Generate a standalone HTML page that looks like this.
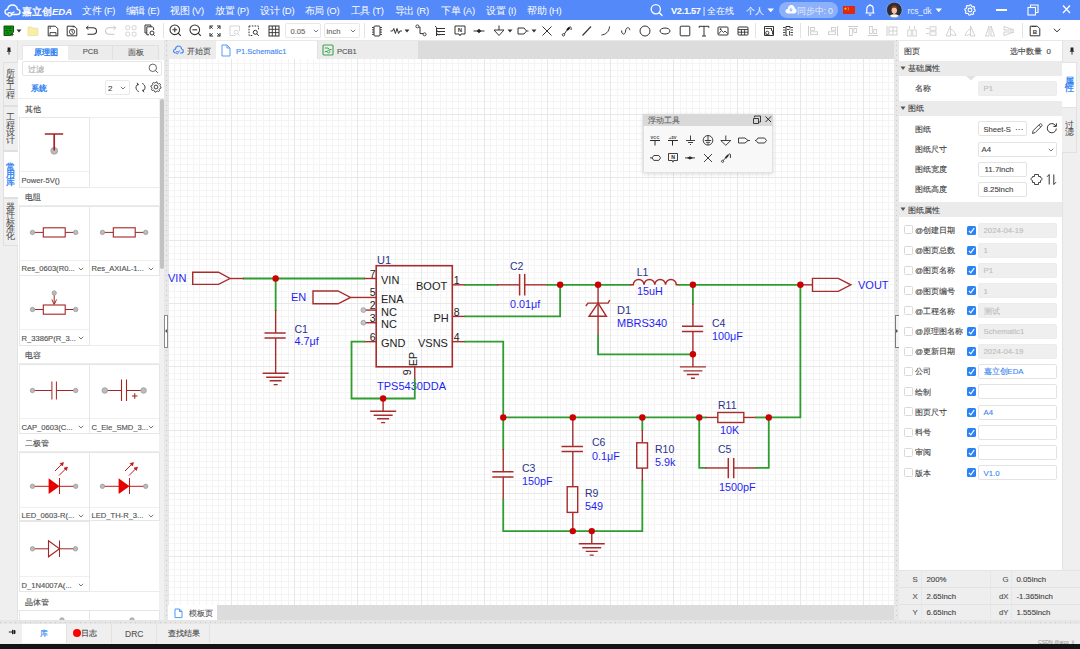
<!DOCTYPE html>
<html><head><meta charset="utf-8">
<style>
*{box-sizing:border-box;margin:0;padding:0}
html,body{width:1080px;height:649px;overflow:hidden;background:#fff}
body{position:relative;font-family:"Liberation Sans",sans-serif;color:#333;font-size:8px}
.a{position:absolute}
.t{position:absolute;white-space:nowrap;line-height:12px;-webkit-text-stroke-width:0.12px}
#tb .t{-webkit-text-stroke-width:0}
.sep{position:absolute;width:1px;background:#e3e3e3}
.vt{position:absolute;text-align:center}
.card{position:absolute;border:1px solid #e6e6e6;background:#fff}
.lbl{position:absolute;font-size:7.6px;line-height:12px;color:#555;white-space:nowrap;-webkit-text-stroke-width:0.15px}
.inp{position:absolute;border:1px solid #e3e3e3;border-radius:2px;background:#fff}
.inp.g{background:#efefef;border-color:#ececec}
.cb{position:absolute;width:9px;height:9px;border:1px solid #d9d9d9;border-radius:1.5px;background:#fff}
.cbk{position:absolute;width:9px;height:9px;border-radius:1.5px;background:#2a83f6}
</style></head>
<body>
<div id="tb"><div class="a" style="left:0;top:0;width:1080px;height:20px;background:#5489f9"></div>
<svg class="a" style="left:4px;top:4px" width="17" height="13" viewBox="0 0 17 13"><path d="M5.5 10.5 H3.8 C2 10.5 1 9.2 1 7.8 C1 6.3 2.2 5.2 3.6 5.3 C4 2.7 6 1 8.5 1 C11.2 1 13.2 3 13.4 5.4 C15 5.5 16 6.6 16 8 C16 9.5 14.8 10.5 13.4 10.5 H12 M12 10.5 L7.5 10.5" fill="none" stroke="#fff" stroke-width="1.4" stroke-linecap="round"/><circle cx="5.6" cy="10.4" r="1.8" fill="#5489f9" stroke="#fff" stroke-width="1.3"/><path d="M7.2 9.6 L10.5 7.8" stroke="#fff" stroke-width="1.3"/></svg>
<div class="t" style="left:22px;top:5.50px;font-size:9.6px;color:#fff;"><span style="-webkit-text-stroke:0.35px #fff">嘉立创</span><b><i style="letter-spacing:-0.1px">EDA</i></b></div>
<div class="t" style="left:82px;top:5.00px;font-size:9.5px;color:#fff;letter-spacing:-0.25px">文件 (F)</div>
<div class="t" style="left:125.5px;top:5.00px;font-size:9.5px;color:#fff;letter-spacing:-0.25px">编辑 (E)</div>
<div class="t" style="left:170px;top:5.00px;font-size:9.5px;color:#fff;letter-spacing:-0.25px">视图 (V)</div>
<div class="t" style="left:215px;top:5.00px;font-size:9.5px;color:#fff;letter-spacing:-0.25px">放置 (P)</div>
<div class="t" style="left:260px;top:5.00px;font-size:9.5px;color:#fff;letter-spacing:-0.25px">设计 (D)</div>
<div class="t" style="left:304.5px;top:5.00px;font-size:9.5px;color:#fff;letter-spacing:-0.25px">布局 (O)</div>
<div class="t" style="left:350.5px;top:5.00px;font-size:9.5px;color:#fff;letter-spacing:-0.25px">工具 (T)</div>
<div class="t" style="left:394.5px;top:5.00px;font-size:9.5px;color:#fff;letter-spacing:-0.25px">导出 (R)</div>
<div class="t" style="left:441px;top:5.00px;font-size:9.5px;color:#fff;letter-spacing:-0.25px">下单 (A)</div>
<div class="t" style="left:486px;top:5.00px;font-size:9.5px;color:#fff;letter-spacing:-0.25px">设置 (I)</div>
<div class="t" style="left:527px;top:5.00px;font-size:9.5px;color:#fff;letter-spacing:-0.25px">帮助 (H)</div>
<svg class="a" style="left:650px;top:3px" width="13" height="14" viewBox="0 0 13 14"><circle cx="5.8" cy="6.2" r="4.6" fill="none" stroke="#fff" stroke-width="1.3"/><path d="M9.2 9.6 L12 12.4" stroke="#fff" stroke-width="1.4" stroke-linecap="round"/></svg>
<div class="t" style="left:671px;top:5.00px;font-size:9.2px;color:#fff;letter-spacing:-0.3px"><b>V2.1.57</b> | 全在线</div>
<div class="t" style="left:746px;top:5.00px;font-size:8.6px;color:#fff;">个人</div>
<svg class="a" style="left:767px;top:7.5px" width="8" height="5" viewBox="0 0 8 5"><path d="M0.5 0.5 H7 L3.75 4.2 Z" fill="#fff"/></svg>
<div class="a" style="left:779px;top:2px;width:59px;height:16px;border-radius:8px;background:#8cb0fa"></div>
<svg class="a" style="left:785px;top:4px" width="12" height="11" viewBox="0 0 12 11"><path d="M3 9.5 C1.3 9.5 0.5 8.3 0.5 7.1 C0.5 5.8 1.5 4.9 2.7 4.9 C3 2.6 4.5 1 6.3 1 C8.3 1 9.7 2.5 9.9 4.6 C11 4.8 11.6 5.8 11.6 7 C11.6 8.4 10.6 9.5 9.2 9.5 Z" fill="#fff"/><path d="M6 3.8 V7 M4.6 5.6 L6 7.2 L7.4 5.6" stroke="#8db0fa" stroke-width="1" fill="none"/></svg>
<div class="t" style="left:797px;top:5.00px;font-size:8.8px;color:rgba(255,255,255,0.8);letter-spacing:-0.2px">同步中: 0</div>
<div class="a" style="left:843px;top:6px;width:12px;height:8px;background:#de2910"></div>
<svg class="a" style="left:843px;top:6px" width="12" height="8" viewBox="0 0 12 8"><path d="M2.5 1 L2.9 2.2 H4.1 L3.1 2.9 L3.5 4.1 L2.5 3.4 L1.5 4.1 L1.9 2.9 L0.9 2.2 H2.1 Z" fill="#ffde00"/><circle cx="5" cy="1.2" r="0.45" fill="#ffde00"/><circle cx="5.6" cy="2.3" r="0.45" fill="#ffde00"/><circle cx="5.6" cy="3.6" r="0.45" fill="#ffde00"/><circle cx="5" cy="4.6" r="0.45" fill="#ffde00"/></svg>
<svg class="a" style="left:864px;top:3px" width="12" height="14" viewBox="0 0 12 14"><path d="M2 10 L2.8 9 V6 C2.8 3.8 4.2 2.4 6 2.4 C7.8 2.4 9.2 3.8 9.2 6 V9 L10 10 Z" fill="none" stroke="#fff" stroke-width="1.2" stroke-linejoin="round"/><path d="M4.8 11.6 C5.2 12.4 6.8 12.4 7.2 11.6" stroke="#fff" stroke-width="1.1" fill="none"/><path d="M6 1 V2.4" stroke="#fff" stroke-width="1.1"/></svg>
<svg class="a" style="left:886px;top:2px" width="17" height="17" viewBox="0 0 17 17"><defs><clipPath id="av"><circle cx="8.3" cy="8" r="7.6"/></clipPath></defs><circle cx="8.3" cy="8" r="7.8" fill="#2b2d38" stroke="rgba(255,255,255,0.55)" stroke-width="0.6"/><g clip-path="url(#av)"><ellipse cx="8.3" cy="16.5" rx="6" ry="4.2" fill="#f7f7f7"/><rect x="7.3" y="10" width="2" height="2.5" fill="#efb394"/><ellipse cx="8.3" cy="8.3" rx="2.7" ry="3.3" fill="#f6c4a4"/><path d="M5.4 8 C5 4.6 6.3 3.6 8.3 3.6 C10.3 3.6 11.6 4.6 11.2 8 C10.8 6.4 10 5.8 8.3 5.8 C6.6 5.8 5.8 6.4 5.4 8 Z" fill="#8e3b17"/></g></svg>
<div class="t" style="left:907.5px;top:5.00px;font-size:8.4px;color:rgba(255,255,255,0.9);letter-spacing:-0.1px">rcs_dk</div>
<svg class="a" style="left:934.5px;top:7.5px" width="8" height="5" viewBox="0 0 8 5"><path d="M0.5 0.5 H7 L3.75 4.2 Z" fill="#fff"/></svg>
<svg class="a" style="left:964px;top:4px" width="12" height="12" viewBox="0 0 12 12"><path d="M6 0.8 L7.2 1 L7.5 2.3 L8.6 2.9 L9.8 2.4 L10.6 3.3 L10.1 4.5 L10.5 5.5 L11.2 6 L11 7.2 L9.8 7.6 L9.2 8.6 L9.6 9.9 L8.7 10.6 L7.5 10.1 L6.5 10.5 L6 11.2 L4.8 11 L4.4 9.8 L3.4 9.2 L2.2 9.6 L1.4 8.7 L1.9 7.5 L1.5 6.5 L0.8 6 L1 4.8 L2.2 4.4 L2.8 3.4 L2.3 2.2 L3.2 1.4 L4.5 1.9 L5.5 1.5 Z" fill="none" stroke="#fff" stroke-width="1.1" stroke-linejoin="round"/><circle cx="6" cy="6" r="1.9" fill="none" stroke="#fff" stroke-width="1.1"/></svg>
<div class="a" style="left:996px;top:9.3px;width:11px;height:1.3px;background:#fff"></div>
<svg class="a" style="left:1027px;top:4px" width="12" height="12" viewBox="0 0 12 12"><rect x="1" y="3.5" width="7.5" height="7.5" fill="none" stroke="#fff" stroke-width="1.1"/><path d="M3.5 3.5 V1 H11 V8.5 H8.5" fill="none" stroke="#fff" stroke-width="1.1"/></svg>
<svg class="a" style="left:1062px;top:4px" width="9" height="11" viewBox="0 0 9 11"><path d="M1 1.5 L8 9 M8 1.5 L1 9" stroke="#fff" stroke-width="1.3"/></svg>
</div>
<div class="a" style="left:0;top:20px;width:1080px;height:21px;background:#fff;border-bottom:1px solid #e8e8e8"></div>
<svg class="a" style="left:3px;top:25px" width="12" height="12" viewBox="0 0 12 12"><path d="M1 1 H10.5 V7 L7.5 10.5 H1 Z" fill="#0a9a0a" stroke="#0b3d0b" stroke-width="0.9"/><path d="M2.5 3.2 H8.5 M2.5 5.6 H5 M6 5.6 H8.5 M3.5 8 H6" stroke="#063806" stroke-width="0.8"/><path d="M9 8 V11.2 M7.4 9.6 H10.6" stroke="#333" stroke-width="1"/></svg>
<svg class="a" style="left:16px;top:29px" width="6" height="4" viewBox="0 0 6 4"><path d="M0.5 0.5 H5.5 L3 3.5 Z" fill="#333"/></svg>
<svg class="a" style="left:27px;top:25px" width="12" height="12" viewBox="0 0 12 12"><path d="M1 2 H4.8 L6 3.2 H10.8 V10.6 H1 Z" fill="#f7eeaa" stroke="#e9df9c" stroke-width="0.8" stroke-linejoin="round"/></svg>
<svg class="a" style="left:47px;top:25px" width="12" height="12" viewBox="0 0 12 12"><path d="M1.2 1.2 H8.3 L10.8 3.7 V10.8 H1.2 Z" fill="none" stroke="#333" stroke-width="1" stroke-linejoin="round"/><path d="M3.2 1.5 V4" stroke="#333" stroke-width="0.9"/><path d="M3 10.6 V7.6 H9 V10.6" fill="none" stroke="#333" stroke-width="0.9"/></svg>
<svg class="a" style="left:66px;top:25px" width="12" height="12" viewBox="0 0 12 12"><path d="M1.2 1.2 H8.3 L10.8 3.7 V10.8 H1.2 Z" fill="none" stroke="#333" stroke-width="1" stroke-linejoin="round"/><circle cx="6" cy="6.8" r="2.6" fill="none" stroke="#333" stroke-width="0.9"/><path d="M6 5 V7 L7 7.6" stroke="#333" stroke-width="0.8" fill="none"/><path d="M6.5 1.8 H9" stroke="#333" stroke-width="0.9"/></svg>
<svg class="a" style="left:85px;top:25px" width="13" height="11" viewBox="0 0 13 11"><path d="M1.5 2.8 H8 C10 2.8 11.5 4.3 11.5 6.1 C11.5 7.9 10 9.3 8 9.3 H2.5" fill="none" stroke="#333" stroke-width="1.1"/><path d="M3.4 1 L1.2 2.8 L3.4 4.6" fill="none" stroke="#333" stroke-width="1"/></svg>
<svg class="a" style="left:104px;top:25px" width="13" height="11" viewBox="0 0 13 11"><path d="M11.5 2.8 H5 C3 2.8 1.5 4.3 1.5 6.1 C1.5 7.9 3 9.3 5 9.3 H10.5" fill="none" stroke="#c8c8c8" stroke-width="1.1"/><path d="M9.6 1 L11.8 2.8 L9.6 4.6" fill="none" stroke="#c8c8c8" stroke-width="1"/></svg>
<svg class="a" style="left:125px;top:25px" width="12" height="12" viewBox="0 0 12 12"><rect x="0.8" y="0.8" width="3.8" height="3.8" rx="0.8" fill="none" stroke="#d0d0d0" stroke-width="0.9"/><rect x="7.2" y="0.8" width="3.8" height="3.8" rx="0.8" fill="none" stroke="#d0d0d0" stroke-width="0.9"/><rect x="0.8" y="7.2" width="3.8" height="3.8" rx="0.8" fill="none" stroke="#d0d0d0" stroke-width="0.9"/><rect x="7.2" y="7.2" width="3.8" height="3.8" rx="0.8" fill="none" stroke="#d0d0d0" stroke-width="0.9"/></svg>
<svg class="a" style="left:144px;top:24px" width="12" height="13" viewBox="0 0 12 13"><path d="M1 1 H6.8 V2.8 M1 1 V9 H2.6" fill="none" stroke="#333" stroke-width="1"/><path d="M2.8 2.8 H8.5 L9.6 3.9 V6 M2.8 2.8 V10.8 H5" fill="none" stroke="#333" stroke-width="1"/><circle cx="8" cy="9" r="2" fill="none" stroke="#333" stroke-width="1"/><path d="M9.4 10.4 L10.8 11.8" stroke="#333" stroke-width="1"/></svg>
<div class="sep" style="left:163px;top:23px;height:15px"></div>
<svg class="a" style="left:169px;top:24px" width="13" height="13" viewBox="0 0 13 13"><circle cx="5.8" cy="5.8" r="4.8" fill="none" stroke="#333" stroke-width="1.1"/><path d="M9.2 9.2 L11.8 11.8" stroke="#333" stroke-width="1.2"/><path d="M3.4 5.8 H8.2 M5.8 3.4 V8.2" stroke="#333" stroke-width="1.1"/></svg>
<svg class="a" style="left:189px;top:24px" width="13" height="13" viewBox="0 0 13 13"><circle cx="5.8" cy="5.8" r="4.8" fill="none" stroke="#333" stroke-width="1.1"/><path d="M9.2 9.2 L11.8 11.8" stroke="#333" stroke-width="1.2"/><path d="M3.4 5.8 H8.2" stroke="#333" stroke-width="1.1"/></svg>
<svg class="a" style="left:209px;top:25px" width="12" height="12" viewBox="0 0 12 12"><path d="M1 4 V1 H4 M8 1 H11 V4 M11 8 V11 H8 M4 11 H1 V8" fill="none" stroke="#333" stroke-width="1.1"/><path d="M1.2 1.2 L3.6 3.6 M10.8 1.2 L8.4 3.6 M10.8 10.8 L8.4 8.4 M1.2 10.8 L3.6 8.4" stroke="#333" stroke-width="1"/></svg>
<svg class="a" style="left:229px;top:25px" width="12" height="12" viewBox="0 0 12 12"><path d="M1 1 H10.5 V6 M1 1 V10.5 H6" fill="none" stroke="#cfcfcf" stroke-width="0.9"/><circle cx="7.2" cy="7.2" r="2" fill="none" stroke="#cfcfcf" stroke-width="0.9"/><path d="M8.6 8.6 L10.6 10.6" stroke="#cfcfcf" stroke-width="0.9"/></svg>
<svg class="a" style="left:248px;top:25px" width="12" height="12" viewBox="0 0 12 12"><path d="M1 1 H10.5 V5 M1 1 V10.5 H5.5" fill="none" stroke="#333" stroke-width="1" stroke-dasharray="1.6 1.2"/><circle cx="7.3" cy="7.3" r="2" fill="none" stroke="#333" stroke-width="1"/><path d="M8.7 8.7 L10.8 10.8" stroke="#333" stroke-width="1"/></svg>
<svg class="a" style="left:268px;top:25px" width="12" height="12" viewBox="0 0 12 12"><rect x="1" y="1" width="10" height="10" fill="none" stroke="#333" stroke-width="1"/><path d="M4.3 1 V11 M7.6 1 V11 M1 4.3 H11 M1 7.6 H11" stroke="#333" stroke-width="0.9"/></svg>
<div class="inp" style="left:285px;top:23px;width:36px;height:15px;border-color:#e8e8e8"></div><div class="t" style="left:290.5px;top:25.5px;color:#666;font-size:7.6px">0.05</div><svg class="a" style="left:313px;top:29px" width="6" height="4" viewBox="0 0 6 4"><path d="M0.8 0.8 L3 3 L5.2 0.8" fill="none" stroke="#555" stroke-width="0.8"/></svg>
<div class="inp" style="left:324px;top:23px;width:36px;height:15px;border-color:#e8e8e8"></div><div class="t" style="left:326.5px;top:25.5px;color:#666;font-size:7.6px">inch</div><svg class="a" style="left:350px;top:29px" width="6" height="4" viewBox="0 0 6 4"><path d="M0.8 0.8 L3 3 L5.2 0.8" fill="none" stroke="#555" stroke-width="0.8"/></svg>
<div class="sep" style="left:364px;top:23px;height:15px"></div>
<svg class="a" style="left:371px;top:25px" width="12" height="12" viewBox="0 0 12 12"><rect x="3" y="1" width="6" height="10" rx="1" fill="none" stroke="#333" stroke-width="1"/><path d="M1 2.5 H3 M1 4.8 H3 M1 7.1 H3 M1 9.4 H3 M9 2.5 H11 M9 4.8 H11 M9 7.1 H11 M9 9.4 H11" stroke="#333" stroke-width="0.9"/></svg>
<svg class="a" style="left:390px;top:25px" width="13" height="12" viewBox="0 0 13 12"><path d="M0.5 6 H2.5 L3.8 3.5 L5.4 8.5 L7 3.5 L8.6 8.5 L9.9 6 H12" fill="none" stroke="#333" stroke-width="1"/></svg>
<svg class="a" style="left:404px;top:29px" width="6" height="4" viewBox="0 0 6 4"><path d="M0.5 0.5 H5.5 L3 3.5 Z" fill="#333"/></svg>
<svg class="a" style="left:415px;top:24px" width="12" height="13" viewBox="0 0 12 13"><circle cx="2.4" cy="2.4" r="1.5" fill="none" stroke="#333" stroke-width="0.9"/><circle cx="9.6" cy="10.3" r="1.5" fill="none" stroke="#333" stroke-width="0.9"/><path d="M3.8 3 H5 V9.6 H8.1" fill="none" stroke="#333" stroke-width="1"/></svg>
<svg class="a" style="left:434px;top:25px" width="12" height="12" viewBox="0 0 12 12"><path d="M1 1 L2.5 2.5 V11 M2.5 3.5 H11 M2.5 6.5 H11 M2.5 9.5 H11" fill="none" stroke="#333" stroke-width="1"/><path d="M2.5 8 L5 10.5 M2.5 5 L5 7.5" stroke="#333" stroke-width="0.8"/></svg>
<svg class="a" style="left:454px;top:25px" width="12" height="12" viewBox="0 0 12 12"><path d="M1 1 H11 V9 H7 L6 10.8 L5 9 H1 Z" fill="none" stroke="#333" stroke-width="1"/><text x="6" y="7.4" font-size="6" font-family="Liberation Sans" font-weight="bold" text-anchor="middle" fill="#333">N</text></svg>
<svg class="a" style="left:473px;top:25px" width="12" height="12" viewBox="0 0 12 12"><path d="M0.5 6 H11.5" stroke="#333" stroke-width="1"/><path d="M6 3.8 L8.4 6 L6 8.2 L3.6 6 Z" fill="#222"/></svg>
<svg class="a" style="left:493px;top:25px" width="12" height="12" viewBox="0 0 12 12"><path d="M6 0.5 V5 M1 5 H11 L6 10.5 Z" fill="none" stroke="#333" stroke-width="1" stroke-linejoin="round"/></svg>
<svg class="a" style="left:507px;top:29px" width="6" height="4" viewBox="0 0 6 4"><path d="M0.5 0.5 H5.5 L3 3.5 Z" fill="#333"/></svg>
<svg class="a" style="left:517px;top:25px" width="12" height="12" viewBox="0 0 12 12"><path d="M1 3 H7 L9.5 6 L7 9 H1 Z M9.5 6 H11.5" fill="none" stroke="#333" stroke-width="1"/></svg>
<svg class="a" style="left:531px;top:29px" width="6" height="4" viewBox="0 0 6 4"><path d="M0.5 0.5 H5.5 L3 3.5 Z" fill="#333"/></svg>
<svg class="a" style="left:541px;top:25px" width="12" height="12" viewBox="0 0 12 12"><path d="M1.5 1.5 L10.5 10.5 M10.5 1.5 L1.5 10.5" stroke="#333" stroke-width="1"/></svg>
<svg class="a" style="left:561px;top:25px" width="12" height="12" viewBox="0 0 12 12"><circle cx="2.5" cy="9.8" r="1.2" fill="none" stroke="#333" stroke-width="0.9"/><path d="M3.3 9 L6.8 4 C7.5 2.8 8.5 1.6 9.6 2 C10.4 2.3 10.3 3.6 10 5" fill="none" stroke="#333" stroke-width="1"/><path d="M6 5 L8.5 2.8" stroke="#111" stroke-width="2"/></svg>
<svg class="a" style="left:581px;top:25px" width="12" height="12" viewBox="0 0 12 12"><path d="M1.5 10.5 L10 1.5" stroke="#333" stroke-width="1.1"/></svg>
<svg class="a" style="left:600px;top:25px" width="12" height="12" viewBox="0 0 12 12"><path d="M1.5 10 C5.5 9.6 9 7 9.6 1.5" fill="none" stroke="#333" stroke-width="1"/></svg>
<svg class="a" style="left:620px;top:25px" width="12" height="12" viewBox="0 0 12 12"><path d="M1.6 5.5 C1.6 10.2 5.2 10.2 5.6 6 C6 1.8 9.6 1.6 9.8 5.2" fill="none" stroke="#333" stroke-width="1"/></svg>
<svg class="a" style="left:639px;top:25px" width="12" height="12" viewBox="0 0 12 12"><circle cx="6" cy="6" r="5" fill="none" stroke="#333" stroke-width="1"/></svg>
<svg class="a" style="left:659px;top:25px" width="12" height="12" viewBox="0 0 12 12"><ellipse cx="6" cy="6" rx="5" ry="3" fill="none" stroke="#333" stroke-width="1"/></svg>
<svg class="a" style="left:679px;top:25px" width="12" height="12" viewBox="0 0 12 12"><rect x="1.2" y="1.2" width="9.6" height="9.6" rx="0.8" fill="none" stroke="#333" stroke-width="1"/></svg>
<svg class="a" style="left:698px;top:25px" width="12" height="12" viewBox="0 0 12 12"><path d="M1 1.3 H11 M6 1.3 V11 M4 11 H8 M1.2 1.3 V2.8 M10.8 1.3 V2.8" fill="none" stroke="#333" stroke-width="1"/></svg>
<svg class="a" style="left:717px;top:25px" width="12" height="12" viewBox="0 0 12 12"><rect x="1" y="2" width="10" height="8" rx="0.8" fill="none" stroke="#333" stroke-width="1"/><path d="M1.5 9 L4.5 5.5 L6.5 7.5 L8 6 L10.5 8.5" fill="none" stroke="#333" stroke-width="0.9"/><circle cx="3.6" cy="4.2" r="0.9" fill="#333"/></svg>
<svg class="a" style="left:737px;top:25px" width="12" height="12" viewBox="0 0 12 12"><rect x="1" y="2" width="10" height="8" rx="0.8" fill="none" stroke="#333" stroke-width="1"/><path d="M1 4.5 H11 M1 7.2 H11 M4.4 4.5 V10 M7.6 4.5 V10" stroke="#333" stroke-width="0.9"/></svg>
<div class="sep" style="left:755px;top:23px;height:15px"></div>
<svg class="a" style="left:763px;top:25px" width="12" height="12" viewBox="0 0 12 12"><path d="M1.5 1.5 H10.5 V10.5 H1.5 Z" fill="none" stroke="#333" stroke-width="1"/><path d="M2.5 3.5 H8 M8.5 3 V6 M9.5 5.5 V9.5" stroke="#333" stroke-width="0.9"/><circle cx="4.3" cy="7.8" r="1.6" fill="none" stroke="#333" stroke-width="0.9"/><path d="M2.5 9.8 H6.5" stroke="#333" stroke-width="0.8"/></svg>
<svg class="a" style="left:782px;top:25px" width="12" height="12" viewBox="0 0 12 12"><path d="M1 2.5 H3.5 M1 5 H3.5 M1 7.5 H3.5 M1 10 H3.5 M8.5 2.5 H11 M8.5 5 H11 M8.5 7.5 H11 M8.5 10 H11" stroke="#333" stroke-width="0.9"/><path d="M4 1.5 H8 V3.5 M4 1.5 V10.5 H5.5" fill="none" stroke="#333" stroke-width="1"/><path d="M5 4.5 H7.5 M7.5 6 V10.5" stroke="#333" stroke-width="0.9"/></svg>
<div class="sep" style="left:800px;top:23px;height:15px"></div>
<svg class="a" style="left:807px;top:25px" width="12" height="12" viewBox="0 0 12 12"><path d="M1.5 1 V11" stroke="#cdcdcd" stroke-width="1"/><rect x="3.5" y="2.5" width="4" height="2.8" fill="none" stroke="#cdcdcd" stroke-width="0.9"/><rect x="3.5" y="6.8" width="7" height="2.8" fill="none" stroke="#cdcdcd" stroke-width="0.9"/></svg>
<svg class="a" style="left:827px;top:25px" width="12" height="12" viewBox="0 0 12 12"><path d="M10.5 1 V11" stroke="#cdcdcd" stroke-width="1"/><rect x="4.5" y="2.5" width="4" height="2.8" fill="none" stroke="#cdcdcd" stroke-width="0.9"/><rect x="1.5" y="6.8" width="7" height="2.8" fill="none" stroke="#cdcdcd" stroke-width="0.9"/></svg>
<svg class="a" style="left:847px;top:25px" width="12" height="12" viewBox="0 0 12 12"><path d="M1 1.5 H11" stroke="#cdcdcd" stroke-width="1"/><rect x="2.5" y="3.5" width="2.8" height="7" fill="none" stroke="#cdcdcd" stroke-width="0.9"/><rect x="6.8" y="3.5" width="2.8" height="4" fill="none" stroke="#cdcdcd" stroke-width="0.9"/></svg>
<svg class="a" style="left:867px;top:25px" width="12" height="12" viewBox="0 0 12 12"><path d="M1 10.5 H11" stroke="#cdcdcd" stroke-width="1"/><rect x="2.5" y="1.5" width="2.8" height="7" fill="none" stroke="#cdcdcd" stroke-width="0.9"/><rect x="6.8" y="4.5" width="2.8" height="4" fill="none" stroke="#cdcdcd" stroke-width="0.9"/></svg>
<svg class="a" style="left:886px;top:25px" width="12" height="12" viewBox="0 0 12 12"><path d="M1 1 V11" stroke="#cdcdcd" stroke-width="1"/><rect x="3" y="2" width="8" height="8" fill="none" stroke="#cdcdcd" stroke-width="0.9"/><path d="M7 2 V10 M3 6 H11" stroke="#cdcdcd" stroke-width="0.9"/></svg>
<svg class="a" style="left:906px;top:25px" width="12" height="12" viewBox="0 0 12 12"><path d="M3.5 1 V4 M8.5 1 V4" stroke="#cdcdcd" stroke-width="0.9"/><rect x="1.8" y="5" width="3.4" height="6" fill="none" stroke="#cdcdcd" stroke-width="0.9"/><rect x="6.8" y="5" width="3.4" height="6" fill="none" stroke="#cdcdcd" stroke-width="0.9"/></svg>
<svg class="a" style="left:925px;top:25px" width="12" height="12" viewBox="0 0 12 12"><path d="M1 3.5 H4 M1 8.5 H4" stroke="#cdcdcd" stroke-width="0.9"/><rect x="5" y="1.8" width="6" height="3.4" fill="none" stroke="#cdcdcd" stroke-width="0.9"/><rect x="5" y="6.8" width="6" height="3.4" fill="none" stroke="#cdcdcd" stroke-width="0.9"/></svg>
<svg class="a" style="left:945px;top:25px" width="12" height="12" viewBox="0 0 12 12"><path d="M5.5 1 L1 11 H5.5 Z M5.5 4 C8 5 10 7 11 10.5 C9 10.5 7 10 5.5 9" fill="none" stroke="#cdcdcd" stroke-width="0.9"/></svg>
<svg class="a" style="left:964px;top:25px" width="12" height="12" viewBox="0 0 12 12"><path d="M6.5 1 L11 11 H6.5 Z M6.5 4 C4 5 2 7 1 10.5 C3 10.5 5 10 6.5 9" fill="none" stroke="#cdcdcd" stroke-width="0.9"/></svg>
<svg class="a" style="left:984px;top:25px" width="12" height="12" viewBox="0 0 12 12"><path d="M5 1 L1.5 11 H5 Z M7 1 L10.5 11 H7 Z" fill="none" stroke="#cdcdcd" stroke-width="0.9"/></svg>
<svg class="a" style="left:1003px;top:25px" width="12" height="12" viewBox="0 0 12 12"><path d="M1 1.5 L11 5 H1 Z M1 7 H11 L1 10.5 Z" fill="none" stroke="#cdcdcd" stroke-width="0.9"/></svg>
<div class="sep" style="left:1022px;top:23px;height:15px"></div>
<svg class="a" style="left:1029px;top:25px" width="12" height="12" viewBox="0 0 12 12"><path d="M1.2 1.2 H8.3 L10.8 3.7 V10.8 H1.2 Z" fill="none" stroke="#333" stroke-width="1" stroke-linejoin="round"/><text x="6" y="9" font-size="6" font-family="Liberation Sans" font-weight="bold" text-anchor="middle" fill="#333">B</text><path d="M3 1.5 H7" stroke="#333" stroke-width="0.9"/></svg>
<svg class="a" style="left:1053px;top:28px" width="8" height="5" viewBox="0 0 8 5"><path d="M0.8 0.8 L4 3.8 L7.2 0.8" fill="none" stroke="#333" stroke-width="1"/></svg>

<div class="a" style="left:0;top:40px;width:18px;height:582px;background:#efefef;border-right:1px solid #e3e3e3"></div>
<svg class="a" style="left:6px;top:46.5px" width="6" height="8" viewBox="0 0 6 8"><path d="M1.6 0.6 H4.4 V3.6 L5.4 4.8 H0.6 L1.6 3.6 Z" fill="#222"/><path d="M3 4.8 V7.6" stroke="#222" stroke-width="0.9"/></svg>
<div class="a" style="left:2.5px;top:61.5px;width:15.5px;height:44.5px;background:#efefef;border:1px solid #e0e0e0;border-right:none"></div>
<div class="vt" style="left:5.5px;width:10px;top:69.5px;line-height:7.4px;font-size:8.6px;color:#484848;">所<br>有<br>工<br>程</div>
<div class="a" style="left:2.5px;top:106px;width:15.5px;height:45px;background:#efefef;border:1px solid #e0e0e0;border-right:none"></div>
<div class="vt" style="left:5.5px;width:10px;top:114.3px;line-height:7.4px;font-size:8.6px;color:#484848;">工<br>程<br>设<br>计</div>
<div class="a" style="left:2.5px;top:151px;width:15.5px;height:47px;background:#fff;border:1px solid #e0e0e0;border-right:none"></div>
<div class="vt" style="left:5.5px;width:10px;top:164.0px;line-height:7.4px;font-size:8.6px;color:#2a7ff2;-webkit-text-stroke-width:0.3px">常<br>用<br>库</div>
<div class="a" style="left:2.5px;top:198px;width:15.5px;height:47.5px;background:#efefef;border:1px solid #e0e0e0;border-right:none"></div>
<div class="vt" style="left:5.5px;width:10px;top:203.8px;line-height:7.4px;font-size:8.6px;color:#484848;">器<br>件<br>标<br>准<br>化</div>
<div class="a" style="left:18px;top:40px;width:147px;height:582px;background:#fff"></div>
<div class="a" style="left:18px;top:40px;width:147px;height:19.5px;background:#efefef"></div>
<div class="a" style="left:21.5px;top:44.5px;width:47px;height:15px;background:#fff;border:1px solid #e3e3e3;border-bottom:none"></div>
<div class="a" style="left:68px;top:44.5px;width:45px;height:15px;background:#ececec;border:1px solid #e0e0e0;border-left:none;border-bottom:none"></div>
<div class="a" style="left:112.5px;top:44.5px;width:46px;height:15px;background:#ececec;border:1px solid #e0e0e0;border-left:none;border-bottom:none"></div>
<div class="t" style="left:34px;top:46.50px;font-size:8px;color:#2a7ff2;-webkit-text-stroke-width:0.35px">原理图</div>
<div class="t" style="left:82.7px;top:46.00px;font-size:7.6px;color:#555;">PCB</div>
<div class="t" style="left:127.5px;top:46.50px;font-size:8px;color:#555;">面板</div>
<div class="inp" style="left:21.5px;top:61.3px;width:140.5px;height:15.2px;border-color:#e6e6e6"></div>
<div class="t" style="left:28.2px;top:64.40px;font-size:8px;color:#a8a8a8;">过滤</div>
<svg class="a" style="left:148px;top:63px" width="11" height="11" viewBox="0 0 11 11"><circle cx="4.8" cy="4.8" r="3.7" fill="none" stroke="#555" stroke-width="0.9"/><path d="M7.5 7.5 L9.8 9.8" stroke="#555" stroke-width="1"/></svg>
<div class="t" style="left:30.5px;top:83.00px;font-size:8px;color:#2a7ff2;-webkit-text-stroke-width:0.35px">系统</div>
<div class="inp" style="left:105.3px;top:80.3px;width:25px;height:14.8px;border-color:#e8e8e8"></div>
<div class="t" style="left:108px;top:82.60px;font-size:8px;color:#444;">2</div>
<svg class="a" style="left:120px;top:86px" width="6" height="4" viewBox="0 0 6 4"><path d="M0.8 0.8 L3 3 L5.2 0.8" fill="none" stroke="#555" stroke-width="0.8"/></svg>
<svg class="a" style="left:135px;top:82px" width="11" height="11" viewBox="0 0 11 11"><path d="M3 2 C1.5 3 0.8 4.5 1 6 C1.3 7.8 2.3 9 3.8 9.6 M8 9 C9.5 8 10.2 6.5 10 5 C9.7 3.2 8.7 2 7.2 1.4" fill="none" stroke="#333" stroke-width="0.9"/><path d="M1.8 1 L3.4 2 L2.8 3.6 M9.2 10 L7.6 9 L8.2 7.4" fill="none" stroke="#333" stroke-width="0.9"/></svg>
<svg class="a" style="left:150px;top:81px" width="12" height="12" viewBox="0 0 12 12"><path d="M6 0.9 L7.1 1.1 L7.4 2.4 L8.5 3 L9.7 2.5 L10.5 3.4 L10 4.6 L10.4 5.6 L11.1 6.1 L10.9 7.2 L9.7 7.6 L9.1 8.6 L9.5 9.8 L8.6 10.5 L7.4 10 L6.4 10.4 L5.9 11.1 L4.8 10.9 L4.4 9.7 L3.4 9.1 L2.2 9.5 L1.5 8.6 L2 7.4 L1.6 6.4 L0.9 5.9 L1.1 4.8 L2.3 4.4 L2.9 3.4 L2.5 2.2 L3.4 1.5 L4.6 2 L5.6 1.6 Z" fill="none" stroke="#333" stroke-width="0.9" stroke-linejoin="round"/><circle cx="6" cy="6" r="1.9" fill="none" stroke="#333" stroke-width="0.9"/></svg>
<div class="a" style="left:18px;top:98px;width:147px;height:1px;background:#ececec"></div>
<div class="a" style="left:159.3px;top:99px;width:5.1px;height:521px;background:#f1f1f1"></div>
<div class="a" style="left:159.6px;top:99px;width:4.8px;height:170px;border-radius:2.4px;background:#c2c2c2"></div>
<div class="t" style="left:25.2px;top:102.90px;font-size:8.4px;color:#4a4a4a;-webkit-text-stroke-width:0.1px">其他</div>
<div class="a" style="left:18px;top:116.5px;width:141px;height:1px;background:#ececec"></div>
<div class="card" style="left:19px;top:117px;width:71px;height:70.5px"></div>
<div class="a" style="left:20px;top:171px;width:69px;height:1px;background:#efefef"></div>
<div class="lbl" style="left:21.5px;top:174.5px">Power-5V()</div>
<div class="a" style="left:89px;top:117px;width:70.5px;height:70.5px;border-bottom:1px solid #ececec"></div>
<div class="t" style="left:25.2px;top:190.90px;font-size:8.4px;color:#4a4a4a;-webkit-text-stroke-width:0.1px">电阻</div>
<div class="a" style="left:18px;top:204.5px;width:141px;height:1px;background:#ececec"></div>
<div class="card" style="left:19px;top:205.5px;width:71px;height:70px"></div>
<div class="a" style="left:20px;top:259.5px;width:69px;height:1px;background:#efefef"></div>
<div class="lbl" style="left:21.5px;top:263.0px">Res_0603(R0...</div>
<svg class="a" style="left:78px;top:266.5px" width="6" height="4" viewBox="0 0 6 4"><path d="M0.8 0.8 L3 3 L5.2 0.8" fill="none" stroke="#555" stroke-width="0.8"/></svg>
<div class="card" style="left:89px;top:205.5px;width:71px;height:70px"></div>
<div class="a" style="left:90px;top:259.5px;width:69px;height:1px;background:#efefef"></div>
<div class="lbl" style="left:91.5px;top:263.0px">Res_AXIAL-1...</div>
<svg class="a" style="left:148px;top:266.5px" width="6" height="4" viewBox="0 0 6 4"><path d="M0.8 0.8 L3 3 L5.2 0.8" fill="none" stroke="#555" stroke-width="0.8"/></svg>
<div class="card" style="left:19px;top:275px;width:71px;height:70.5px"></div>
<div class="a" style="left:20px;top:329px;width:69px;height:1px;background:#efefef"></div>
<div class="lbl" style="left:21.5px;top:332.5px">R_3386P(R_3...</div>
<svg class="a" style="left:78px;top:336px" width="6" height="4" viewBox="0 0 6 4"><path d="M0.8 0.8 L3 3 L5.2 0.8" fill="none" stroke="#555" stroke-width="0.8"/></svg>
<div class="a" style="left:89px;top:275px;width:70.5px;height:70.5px;border-bottom:1px solid #ececec"></div>
<div class="t" style="left:25.2px;top:349.40px;font-size:8.4px;color:#4a4a4a;-webkit-text-stroke-width:0.1px">电容</div>
<div class="a" style="left:18px;top:363px;width:141px;height:1px;background:#ececec"></div>
<div class="card" style="left:19px;top:363.5px;width:71px;height:70px"></div>
<div class="a" style="left:20px;top:418px;width:69px;height:1px;background:#efefef"></div>
<div class="lbl" style="left:21.5px;top:421.5px">CAP_0603(C...</div>
<svg class="a" style="left:78px;top:425px" width="6" height="4" viewBox="0 0 6 4"><path d="M0.8 0.8 L3 3 L5.2 0.8" fill="none" stroke="#555" stroke-width="0.8"/></svg>
<div class="card" style="left:89px;top:363.5px;width:71px;height:70px"></div>
<div class="a" style="left:90px;top:418px;width:69px;height:1px;background:#efefef"></div>
<div class="lbl" style="left:91.5px;top:421.5px">C_Ele_SMD_3...</div>
<svg class="a" style="left:148px;top:425px" width="6" height="4" viewBox="0 0 6 4"><path d="M0.8 0.8 L3 3 L5.2 0.8" fill="none" stroke="#555" stroke-width="0.8"/></svg>
<div class="t" style="left:25.2px;top:437.40px;font-size:8.4px;color:#4a4a4a;-webkit-text-stroke-width:0.1px">二极管</div>
<div class="a" style="left:18px;top:451px;width:141px;height:1px;background:#ececec"></div>
<div class="card" style="left:19px;top:451.7px;width:71px;height:69.5px"></div>
<div class="a" style="left:20px;top:506.5px;width:69px;height:1px;background:#efefef"></div>
<div class="lbl" style="left:21.5px;top:510.0px">LED_0603-R(...</div>
<svg class="a" style="left:78px;top:513.5px" width="6" height="4" viewBox="0 0 6 4"><path d="M0.8 0.8 L3 3 L5.2 0.8" fill="none" stroke="#555" stroke-width="0.8"/></svg>
<div class="card" style="left:89px;top:451.7px;width:71px;height:69.5px"></div>
<div class="a" style="left:90px;top:506.5px;width:69px;height:1px;background:#efefef"></div>
<div class="lbl" style="left:91.5px;top:510.0px">LED_TH-R_3...</div>
<svg class="a" style="left:148px;top:513.5px" width="6" height="4" viewBox="0 0 6 4"><path d="M0.8 0.8 L3 3 L5.2 0.8" fill="none" stroke="#555" stroke-width="0.8"/></svg>
<div class="card" style="left:19px;top:521px;width:71px;height:70.5px"></div>
<div class="a" style="left:20px;top:576px;width:69px;height:1px;background:#efefef"></div>
<div class="lbl" style="left:21.5px;top:579.5px">D_1N4007A(...</div>
<svg class="a" style="left:78px;top:583px" width="6" height="4" viewBox="0 0 6 4"><path d="M0.8 0.8 L3 3 L5.2 0.8" fill="none" stroke="#555" stroke-width="0.8"/></svg>
<div class="a" style="left:89px;top:521px;width:70.5px;height:70.5px;border-bottom:1px solid #ececec"></div>
<div class="t" style="left:25.2px;top:595.90px;font-size:8.4px;color:#4a4a4a;-webkit-text-stroke-width:0.1px">晶体管</div>
<div class="a" style="left:18px;top:609.5px;width:141px;height:1px;background:#ececec"></div>
<div class="card" style="left:19px;top:610px;width:71px;height:30px"></div>
<div class="card" style="left:89px;top:610px;width:71px;height:30px"></div>
<svg class="a" style="left:0;top:0" width="170" height="622"><circle cx="54.2" cy="150.8" r="3.4" fill="#bcbcbc" stroke="#9a9a9a" stroke-width="0.8"/><path d="M44.8 134 H63.2 M54.2 134 V150.5" stroke="#a32626" stroke-width="1.7" fill="none"/><path d="M32.5 232.4 H43.3 M65.2 232.4 H75.7" stroke="#a32626" stroke-width="1"/><rect x="43.3" y="227.8" width="21.9" height="9.2" fill="none" stroke="#a32626" stroke-width="1.1"/><circle cx="32.5" cy="232.4" r="2.2" fill="#bcbcbc" stroke="#9a9a9a" stroke-width="0.8"/><circle cx="75.7" cy="232.4" r="2.2" fill="#bcbcbc" stroke="#9a9a9a" stroke-width="0.8"/><path d="M102.5 232.4 H113.3 M135.2 232.4 H145.7" stroke="#a32626" stroke-width="1"/><rect x="113.3" y="227.8" width="21.9" height="9.2" fill="none" stroke="#a32626" stroke-width="1.1"/><circle cx="102.5" cy="232.4" r="2.2" fill="#bcbcbc" stroke="#9a9a9a" stroke-width="0.8"/><circle cx="145.7" cy="232.4" r="2.2" fill="#bcbcbc" stroke="#9a9a9a" stroke-width="0.8"/><path d="M32.5 309.5 H43.3 M65.2 309.5 H75.7 M54.2 293.5 V304" stroke="#a32626" stroke-width="1"/><rect x="43.3" y="305" width="21.9" height="9.2" fill="none" stroke="#a32626" stroke-width="1.1"/><path d="M51.8 299.5 L54.2 304.5 L56.6 299.5" fill="none" stroke="#a32626" stroke-width="1"/><circle cx="32.5" cy="309.5" r="2.2" fill="#bcbcbc" stroke="#9a9a9a" stroke-width="0.8"/><circle cx="75.7" cy="309.5" r="2.2" fill="#bcbcbc" stroke="#9a9a9a" stroke-width="0.8"/><circle cx="54.2" cy="293" r="2.2" fill="#bcbcbc" stroke="#9a9a9a" stroke-width="0.8"/><path d="M32.5 390.5 H51.9 M56.4 390.5 H75.7 M51.9 381.5 V399.5 M56.4 381.5 V399.5" stroke="#a32626" stroke-width="1"/><circle cx="32.5" cy="390.5" r="2.2" fill="#bcbcbc" stroke="#9a9a9a" stroke-width="0.8"/><circle cx="75.7" cy="390.5" r="2.2" fill="#bcbcbc" stroke="#9a9a9a" stroke-width="0.8"/><path d="M104.8 390.5 H121.5 M126.5 390.5 H143.6 M121.5 379.5 V401 M126.5 379.5 V401 M132 396 H137.5 M134.75 393.2 V398.8" stroke="#a32626" stroke-width="1.1"/><circle cx="104.8" cy="390.5" r="2.8" fill="#bcbcbc" stroke="#9a9a9a" stroke-width="0.8"/><circle cx="143.6" cy="390.5" r="2.8" fill="#bcbcbc" stroke="#9a9a9a" stroke-width="0.8"/><path d="M32.5 486.3 H75.7 M59.5 478 V494" stroke="#c01818" stroke-width="1"/><path d="M48.6 478.3 L59.5 486.3 L48.6 494 Z" fill="#e80000"/><path d="M55 471 L62.5 463.5 M59 475.5 L66.5 468" stroke="#c01818" stroke-width="1"/><path d="M60 463.5 L63.5 462.5 L62.5 466 Z M64 468 L67.5 467 L66.5 470.5 Z" fill="#c01818" stroke="#c01818" stroke-width="0.6"/><circle cx="32.5" cy="486.3" r="2.2" fill="#bcbcbc" stroke="#9a9a9a" stroke-width="0.8"/><circle cx="75.7" cy="486.3" r="2.2" fill="#bcbcbc" stroke="#9a9a9a" stroke-width="0.8"/><path d="M102.5 486.3 H145.7 M129.5 478 V494" stroke="#c01818" stroke-width="1"/><path d="M118.6 478.3 L129.5 486.3 L118.6 494 Z" fill="#e80000"/><path d="M125 471 L132.5 463.5 M129 475.5 L136.5 468" stroke="#c01818" stroke-width="1"/><path d="M130 463.5 L133.5 462.5 L132.5 466 Z M134 468 L137.5 467 L136.5 470.5 Z" fill="#c01818" stroke="#c01818" stroke-width="0.6"/><circle cx="102.5" cy="486.3" r="2.2" fill="#bcbcbc" stroke="#9a9a9a" stroke-width="0.8"/><circle cx="145.7" cy="486.3" r="2.2" fill="#bcbcbc" stroke="#9a9a9a" stroke-width="0.8"/><path d="M32.5 548.8 H75.5 M59.5 540.5 V557" stroke="#a32626" stroke-width="1"/><path d="M48.5 540.8 L59.5 548.8 L48.5 556.8 Z" fill="#fff" stroke="#a32626" stroke-width="1.1"/><circle cx="32.5" cy="548.8" r="2.2" fill="#bcbcbc" stroke="#9a9a9a" stroke-width="0.8"/><circle cx="75.5" cy="548.8" r="2.2" fill="#bcbcbc" stroke="#9a9a9a" stroke-width="0.8"/><circle cx="62" cy="620" r="2.2" fill="#bcbcbc" stroke="#9a9a9a" stroke-width="0.8"/><circle cx="132" cy="620" r="2.2" fill="#bcbcbc" stroke="#9a9a9a" stroke-width="0.8"/></svg>
<div class="a" style="left:164.4px;top:40px;width:3.6px;height:582px;background:#e8e8e8"></div>
<div class="a" style="left:165.7px;top:40px;width:1px;height:582px;background-image:repeating-linear-gradient(180deg,#c9c9c9 0 1px,transparent 1px 5px)"></div>
<div class="a" style="left:164px;top:315px;width:4px;height:32.7px;background:#fff;border:1px solid #8a8a8a"></div>
<svg class="a" style="left:165px;top:329px" width="2" height="4" viewBox="0 0 2 4"><path d="M2 0 L0 2 L2 4 Z" fill="#555"/></svg>

<div class="a" style="left:168px;top:40px;width:727px;height:19px;background:#dcdcdc;border-top:1px solid #e8e8e8"></div>
<div class="a" style="left:168px;top:41px;width:48px;height:18px;background:#ececec"></div>
<div class="a" style="left:216px;top:41px;width:101px;height:18px;background:#fff"></div>
<div class="a" style="left:317px;top:41px;width:101px;height:18px;background:#ececec;border-left:1px solid #e0e0e0"></div>
<svg class="a" style="left:173px;top:45px" width="11" height="10" viewBox="0 0 11 10"><path d="M2.6 8 C1.2 8 0.6 7 0.6 6 C0.6 4.9 1.4 4.1 2.4 4.1 C2.7 2.2 3.9 1 5.5 1 C7.2 1 8.4 2.2 8.6 4 C9.6 4.1 10.3 4.9 10.3 6 C10.3 7.1 9.5 8 8.3 8 H7" fill="none" stroke="#4a86f0" stroke-width="1.2"/><circle cx="4.2" cy="7.6" r="1.2" fill="none" stroke="#4a86f0" stroke-width="1"/><path d="M5.3 7 L7 5.6" stroke="#4a86f0" stroke-width="1"/></svg>
<div class="t" style="left:187px;top:45.50px;font-size:8px;color:#555;">开始页</div>
<svg class="a" style="left:221px;top:44px" width="10" height="13" viewBox="0 0 10 13"><path d="M1 1 H6 L9 4 V12 H1 Z M6 1 V4 H9" fill="none" stroke="#5b9bf2" stroke-width="1" stroke-linejoin="round"/></svg>
<div class="t" style="left:236px;top:45.50px;font-size:7.5px;color:#3c86f2;">P1.Schematic1</div>
<svg class="a" style="left:322px;top:44px" width="12" height="12" viewBox="0 0 12 12"><rect x="1" y="1" width="10" height="10" rx="1" fill="none" stroke="#3aa64a" stroke-width="1.1"/><path d="M2.8 4 H6 L7.5 5.5 H9.5 M2.8 7.5 H5" fill="none" stroke="#3aa64a" stroke-width="1"/><circle cx="6.6" cy="7.6" r="1.3" fill="none" stroke="#3aa64a" stroke-width="0.9"/></svg>
<div class="t" style="left:337px;top:45.50px;font-size:7.6px;color:#555;">PCB1</div>
<svg class="a" style="left:168px;top:59px" width="727" height="546" viewBox="168 59 727 546"><rect x="168" y="59" width="727" height="546" fill="#fff"/><path d="M174.5 59V605M180.5 59V605M187.5 59V605M193.5 59V605M199.5 59V605M206.5 59V605M212.5 59V605M218.5 59V605M225.5 59V605M237.5 59V605M244.5 59V605M250.5 59V605M256.5 59V605M263.5 59V605M269.5 59V605M275.5 59V605M281.5 59V605M288.5 59V605M300.5 59V605M307.5 59V605M313.5 59V605M319.5 59V605M326.5 59V605M332.5 59V605M338.5 59V605M345.5 59V605M351.5 59V605M364.5 59V605M370.5 59V605M376.5 59V605M383.5 59V605M389.5 59V605M395.5 59V605M402.5 59V605M408.5 59V605M414.5 59V605M427.5 59V605M433.5 59V605M440.5 59V605M446.5 59V605M452.5 59V605M458.5 59V605M465.5 59V605M471.5 59V605M477.5 59V605M490.5 59V605M496.5 59V605M503.5 59V605M509.5 59V605M515.5 59V605M522.5 59V605M528.5 59V605M534.5 59V605M541.5 59V605M553.5 59V605M560.5 59V605M566.5 59V605M572.5 59V605M579.5 59V605M585.5 59V605M591.5 59V605M598.5 59V605M604.5 59V605M617.5 59V605M623.5 59V605M629.5 59V605M636.5 59V605M642.5 59V605M648.5 59V605M654.5 59V605M661.5 59V605M667.5 59V605M680.5 59V605M686.5 59V605M692.5 59V605M699.5 59V605M705.5 59V605M711.5 59V605M718.5 59V605M724.5 59V605M730.5 59V605M743.5 59V605M749.5 59V605M756.5 59V605M762.5 59V605M768.5 59V605M775.5 59V605M781.5 59V605M787.5 59V605M794.5 59V605M806.5 59V605M813.5 59V605M819.5 59V605M825.5 59V605M831.5 59V605M838.5 59V605M844.5 59V605M850.5 59V605M857.5 59V605M869.5 59V605M876.5 59V605M882.5 59V605M888.5 59V605M168 63.5H895M168 70.5H895M168 76.5H895M168 82.5H895M168 89.5H895M168 95.5H895M168 101.5H895M168 108.5H895M168 120.5H895M168 126.5H895M168 133.5H895M168 139.5H895M168 145.5H895M168 152.5H895M168 158.5H895M168 164.5H895M168 171.5H895M168 183.5H895M168 190.5H895M168 196.5H895M168 202.5H895M168 209.5H895M168 215.5H895M168 221.5H895M168 227.5H895M168 234.5H895M168 246.5H895M168 253.5H895M168 259.5H895M168 265.5H895M168 272.5H895M168 278.5H895M168 284.5H895M168 291.5H895M168 297.5H895M168 310.5H895M168 316.5H895M168 322.5H895M168 329.5H895M168 335.5H895M168 341.5H895M168 347.5H895M168 354.5H895M168 360.5H895M168 373.5H895M168 379.5H895M168 385.5H895M168 392.5H895M168 398.5H895M168 404.5H895M168 411.5H895M168 417.5H895M168 423.5H895M168 436.5H895M168 442.5H895M168 449.5H895M168 455.5H895M168 461.5H895M168 467.5H895M168 474.5H895M168 480.5H895M168 486.5H895M168 499.5H895M168 505.5H895M168 512.5H895M168 518.5H895M168 524.5H895M168 531.5H895M168 537.5H895M168 543.5H895M168 550.5H895M168 562.5H895M168 569.5H895M168 575.5H895M168 581.5H895M168 587.5H895M168 594.5H895M168 600.5H895" stroke="#f4f4f4" stroke-width="1" fill="none"/><path d="M168 114.5H895M168 177.5H895M168 240.5H895M168 303.5H895M168 366.5H895M168 430.5H895M168 493.5H895M168 556.5H895" stroke="#e8e8e8" stroke-width="1" fill="none"/><path d="M168.5 59V605M231.5 59V605M294.5 59V605M357.5 59V605M421.5 59V605M484.5 59V605M547.5 59V605M610.5 59V605M673.5 59V605M737.5 59V605M800.5 59V605M863.5 59V605" stroke="#e7e7e7" stroke-width="1" fill="none"/><path d="M243.8 278.51 L364.16 278.51" fill="none" stroke="#2e9c2e" stroke-width="1.8" stroke-linejoin="miter" stroke-linecap="square"/><path d="M275.65 278.51 L275.65 310.09" fill="none" stroke="#2e9c2e" stroke-width="1.8" stroke-linejoin="miter" stroke-linecap="square"/><path d="M230 278.51 L243.8 278.51" fill="none" stroke="#a82c2c" stroke-width="1.4"/><path d="M192.7 272.2 H218.5 L230 278.51 L218.5 284.4 H192.7 Z" fill="none" stroke="#a82c2c" stroke-width="1.4"/><text x="168" y="282.12" font-size="11" fill="#1f1ff2" >VIN</text><path d="M275.65 310.09 L275.65 332.9" fill="none" stroke="#a82c2c" stroke-width="1.4"/><path d="M264.5 332.9H285.7M264.5 338.1H285.7" stroke="#a82c2c" stroke-width="1.5"/><path d="M275.65 338.1 L275.65 373.2" fill="none" stroke="#a82c2c" stroke-width="1.4"/><path d="M275.65 373.2 L275.65 373.2" fill="none" stroke="#a82c2c" stroke-width="1.4"/><path d="M262.65 373.2H288.65M266.15 377.2H285.15M269.65 380.8H281.65M273.65 384.59999999999997H277.65" stroke="#a82c2c" stroke-width="1.4"/><circle cx="275.65" cy="278.51" r="3.2" fill="#cc0000"/><text x="294.5" y="333.13" font-size="10.5" fill="#2a3388" >C1</text><text x="294.5" y="345.44" font-size="10.8" fill="#1f1ff2" >4.7μf</text><path d="M313 291 H338 L350.5 297.45 L338 303.8 H313 Z" fill="none" stroke="#a82c2c" stroke-width="1.4"/><path d="M350.5 297.45 L364.16 297.45" fill="none" stroke="#a82c2c" stroke-width="1.4"/><text x="291" y="301.01" font-size="11" fill="#1f1ff2" >EN</text><rect x="376.2" y="265.7" width="76.10000000000002" height="101.10000000000002" fill="none" stroke="#a82c2c" stroke-width="1.6"/><path d="M364.16 278.51 L376.2 278.51" fill="none" stroke="#a82c2c" stroke-width="1.4"/><text x="369.8" y="277.54" font-size="10.5" fill="#222" >7</text><text x="381" y="284.12" font-size="11" fill="#222" >VIN</text><path d="M364.16 297.45 L376.2 297.45" fill="none" stroke="#a82c2c" stroke-width="1.4"/><text x="369.8" y="296.48" font-size="10.5" fill="#222" >5</text><text x="381" y="303.06" font-size="11" fill="#222" >ENA</text><path d="M364.16 310.09 L376.2 310.09" fill="none" stroke="#a82c2c" stroke-width="1.4"/><text x="369.8" y="309.12" font-size="10.5" fill="#222" >2</text><text x="381" y="315.70" font-size="11" fill="#222" >NC</text><path d="M364.16 322.72 L376.2 322.72" fill="none" stroke="#a82c2c" stroke-width="1.4"/><text x="369.8" y="321.75" font-size="10.5" fill="#222" >3</text><text x="381" y="328.34" font-size="11" fill="#222" >NC</text><path d="M364.16 341.66 L376.2 341.66" fill="none" stroke="#a82c2c" stroke-width="1.4"/><text x="369.8" y="340.69" font-size="10.5" fill="#222" >6</text><text x="381" y="347.28" font-size="11" fill="#222" >GND</text><circle cx="363.36" cy="310.09" r="2.4" fill="#c4c4c4" stroke="#9a9a9a" stroke-width="0.8"/><circle cx="363.36" cy="322.72" r="2.4" fill="#c4c4c4" stroke="#9a9a9a" stroke-width="0.8"/><path d="M452.3 284.82 L465.31 284.82" fill="none" stroke="#a82c2c" stroke-width="1.4"/><text x="453.8" y="284.05" font-size="10.5" fill="#222" >1</text><text x="416" y="290.13" font-size="11" fill="#222" >BOOT</text><path d="M452.3 316.4 L465.31 316.4" fill="none" stroke="#a82c2c" stroke-width="1.4"/><text x="453.8" y="315.63" font-size="10.5" fill="#222" >8</text><text x="433.5" y="321.71" font-size="11" fill="#222" >PH</text><path d="M452.3 341.66 L465.31 341.66" fill="none" stroke="#a82c2c" stroke-width="1.4"/><text x="453.8" y="340.89" font-size="10.5" fill="#222" >4</text><text x="418" y="346.98" font-size="11" fill="#222" >VSNS</text><path d="M414.74 366.8 L414.74 379.55" fill="none" stroke="#a82c2c" stroke-width="1.4"/><text x="0" y="0" font-size="10.5" fill="#222" transform="translate(416.8 366) rotate(-90)">EP</text><text x="0" y="0" font-size="10.5" fill="#222" transform="translate(410.7 375.3) rotate(-90)">9</text><text x="377" y="263.81" font-size="11" fill="#2a3388" >U1</text><text x="377" y="389.71" font-size="11" fill="#1f1ff2" >TPS5430DDA</text><path d="M364.16 341.66 L351.52 341.66 L351.52 398.5 L414.74 398.5 L414.74 379.55" fill="none" stroke="#2e9c2e" stroke-width="1.8" stroke-linejoin="miter" stroke-linecap="square"/><path d="M383.13 398.5 L383.13 411.2" fill="none" stroke="#a82c2c" stroke-width="1.4"/><path d="M383.13 411.2 L383.13 411.2" fill="none" stroke="#a82c2c" stroke-width="1.4"/><path d="M370.13 411.2H396.13M373.63 415.2H392.63M377.13 418.8H389.13M381.13 422.59999999999997H385.13" stroke="#a82c2c" stroke-width="1.4"/><circle cx="383.13" cy="398.5" r="3.2" fill="#cc0000"/><path d="M465.31 284.82 L496.92 284.82" fill="none" stroke="#2e9c2e" stroke-width="1.8" stroke-linejoin="miter" stroke-linecap="square"/><path d="M496.92 284.82 L519.6 284.82" fill="none" stroke="#a82c2c" stroke-width="1.4"/><path d="M519.6 274V295.5M524.7 274V295.5" stroke="#a82c2c" stroke-width="1.5"/><path d="M524.7 284.82 L547.5 284.82" fill="none" stroke="#a82c2c" stroke-width="1.4"/><path d="M547.5 284.82 L630 284.82" fill="none" stroke="#2e9c2e" stroke-width="1.8" stroke-linejoin="miter" stroke-linecap="square"/><text x="510" y="270.03" font-size="10.5" fill="#2a3388" >C2</text><text x="510" y="307.94" font-size="10.8" fill="#1f1ff2" >0.01μf</text><path d="M465.31 316.4 L560.14 316.4 L560.14 284.82" fill="none" stroke="#2e9c2e" stroke-width="1.8" stroke-linejoin="miter" stroke-linecap="square"/><path d="M630 284.82 H633.3 A5.375 5.375 0 0 1 644.05 284.82 A5.375 5.375 0 0 1 654.80 284.82 A5.375 5.375 0 0 1 665.55 284.82 A5.375 5.375 0 0 1 676.30 284.82 H679.6" fill="none" stroke="#a82c2c" stroke-width="1.5"/><path d="M679.6 284.82 L800.38 284.82" fill="none" stroke="#2e9c2e" stroke-width="1.8" stroke-linejoin="miter" stroke-linecap="square"/><text x="636.7" y="276.03" font-size="10.5" fill="#2a3388" >L1</text><text x="637" y="295.04" font-size="10.8" fill="#1f1ff2" >15uH</text><path d="M598.07 284.82 L598.07 335.35" fill="none" stroke="#a82c2c" stroke-width="1.4"/><path d="M598.07 303.1 L589 316.3 H606.4 Z" fill="none" stroke="#a82c2c" stroke-width="1.4"/><path d="M585.8 306 L588 303.1 H608 L609.8 300.2" fill="none" stroke="#a82c2c" stroke-width="1.4"/><path d="M598.07 335.35 L598.07 354.29 L692.9 354.29" fill="none" stroke="#2e9c2e" stroke-width="1.8" stroke-linejoin="miter" stroke-linecap="square"/><text x="617" y="314.01" font-size="11" fill="#2a3388" >D1</text><text x="617" y="327.01" font-size="11" fill="#1f1ff2" >MBRS340</text><path d="M692.9 284.82 L692.9 303.77" fill="none" stroke="#2e9c2e" stroke-width="1.8" stroke-linejoin="miter" stroke-linecap="square"/><path d="M692.9 303.77 L692.9 326.2" fill="none" stroke="#a82c2c" stroke-width="1.4"/><path d="M682 326.2H703.2M682 331.6H703.2" stroke="#a82c2c" stroke-width="1.5"/><path d="M692.9 331.6 L692.9 366.9" fill="none" stroke="#a82c2c" stroke-width="1.4"/><path d="M692.9 366.9 L692.9 366.9" fill="none" stroke="#a82c2c" stroke-width="1.4"/><path d="M679.9 366.9H705.9M683.4 370.9H702.4M686.9 374.5H698.9M690.9 378.29999999999995H694.9" stroke="#a82c2c" stroke-width="1.4"/><circle cx="692.9" cy="354.29" r="3.2" fill="#cc0000"/><text x="712" y="326.83" font-size="10.5" fill="#2a3388" >C4</text><text x="712" y="340.24" font-size="10.8" fill="#1f1ff2" >100μF</text><path d="M800.38 284.82 L812.5 284.82" fill="none" stroke="#a82c2c" stroke-width="1.4"/><path d="M812.5 278.4 H838.3 L850.8 284.82 L838.3 291.4 H812.5 Z" fill="none" stroke="#a82c2c" stroke-width="1.4"/><text x="858" y="289.01" font-size="11" fill="#1f1ff2" >VOUT</text><path d="M465.31 341.66 L503.24 341.66 L503.24 417.44 L699.23 417.44" fill="none" stroke="#2e9c2e" stroke-width="1.8" stroke-linejoin="miter" stroke-linecap="square"/><path d="M768.77 417.44 L800.38 417.44 L800.38 284.82" fill="none" stroke="#2e9c2e" stroke-width="1.8" stroke-linejoin="miter" stroke-linecap="square"/><path d="M503.24 417.44 L503.24 449.02" fill="none" stroke="#2e9c2e" stroke-width="1.8" stroke-linejoin="miter" stroke-linecap="square"/><path d="M503.24 449.02 L503.24 471.8" fill="none" stroke="#a82c2c" stroke-width="1.4"/><path d="M492.3 471.8H513.5M492.3 477H513.5" stroke="#a82c2c" stroke-width="1.5"/><path d="M503.24 477 L503.24 499.54" fill="none" stroke="#a82c2c" stroke-width="1.4"/><path d="M503.24 499.54 L503.24 531.11 L642.33 531.11 L642.33 480.59" fill="none" stroke="#2e9c2e" stroke-width="1.8" stroke-linejoin="miter" stroke-linecap="square"/><text x="522" y="471.83" font-size="10.5" fill="#2a3388" >C3</text><text x="522" y="484.94" font-size="10.8" fill="#1f1ff2" >150pF</text><path d="M572.79 417.44 L572.79 446.6" fill="none" stroke="#a82c2c" stroke-width="1.4"/><path d="M561.5 446.6H583M561.5 451.4H583" stroke="#a82c2c" stroke-width="1.5"/><path d="M572.79 451.4 L572.79 486.7" fill="none" stroke="#a82c2c" stroke-width="1.4"/><rect x="567.2" y="486.7" width="10.5" height="25.7" fill="none" stroke="#a82c2c" stroke-width="1.4"/><path d="M572.79 512.4 L572.79 531.11" fill="none" stroke="#a82c2c" stroke-width="1.4"/><text x="592" y="445.83" font-size="10.5" fill="#2a3388" >C6</text><text x="592" y="459.94" font-size="10.8" fill="#1f1ff2" >0.1μF</text><text x="585" y="496.83" font-size="10.5" fill="#2a3388" >R9</text><text x="585" y="509.94" font-size="10.8" fill="#1f1ff2" >549</text><path d="M642.33 417.44 L642.33 430.07" fill="none" stroke="#2e9c2e" stroke-width="1.8" stroke-linejoin="miter" stroke-linecap="square"/><path d="M642.33 430.07 L642.33 442.8" fill="none" stroke="#a82c2c" stroke-width="1.4"/><rect x="636.7" y="442.8" width="10.8" height="25.3" fill="none" stroke="#a82c2c" stroke-width="1.4"/><path d="M642.33 468.1 L642.33 480.59" fill="none" stroke="#a82c2c" stroke-width="1.4"/><text x="655" y="452.83" font-size="10.5" fill="#2a3388" >R10</text><text x="655" y="465.94" font-size="10.8" fill="#1f1ff2" >5.9k</text><path d="M591.75 531.11 L591.75 543.74" fill="none" stroke="#a82c2c" stroke-width="1.4"/><path d="M591.75 543.74 L591.75 543.74" fill="none" stroke="#a82c2c" stroke-width="1.4"/><path d="M578.75 543.74H604.75M582.25 547.74H601.25M585.75 551.34H597.75M589.75 555.14H593.75" stroke="#a82c2c" stroke-width="1.4"/><path d="M699.23 417.44 L705.55 417.44" fill="none" stroke="#2e9c2e" stroke-width="1.8" stroke-linejoin="miter" stroke-linecap="square"/><path d="M705.55 417.44 L717.8 417.44" fill="none" stroke="#a82c2c" stroke-width="1.4"/><rect x="717.8" y="412.5" width="26" height="10" fill="none" stroke="#a82c2c" stroke-width="1.4"/><path d="M743.8 417.44 L756.12 417.44" fill="none" stroke="#a82c2c" stroke-width="1.4"/><path d="M756.12 417.44 L768.77 417.44" fill="none" stroke="#2e9c2e" stroke-width="1.8" stroke-linejoin="miter" stroke-linecap="square"/><text x="718" y="409.13" font-size="10.5" fill="#2a3388" >R11</text><text x="720" y="434.44" font-size="10.8" fill="#1f1ff2" >10K</text><path d="M705.55 467.96 L699.23 467.96 L699.23 417.44" fill="none" stroke="#2e9c2e" stroke-width="1.8" stroke-linejoin="miter" stroke-linecap="square"/><path d="M705.55 467.96 L728.3 467.96" fill="none" stroke="#a82c2c" stroke-width="1.4"/><path d="M728.3 458V478.3M733.7 458V478.3" stroke="#a82c2c" stroke-width="1.5"/><path d="M733.7 467.96 L756.12 467.96" fill="none" stroke="#a82c2c" stroke-width="1.4"/><path d="M756.12 467.96 L768.77 467.96 L768.77 417.44" fill="none" stroke="#2e9c2e" stroke-width="1.8" stroke-linejoin="miter" stroke-linecap="square"/><text x="718" y="452.83" font-size="10.5" fill="#2a3388" >C5</text><text x="719" y="490.94" font-size="10.8" fill="#1f1ff2" >1500pF</text><circle cx="560.14" cy="284.82" r="3.2" fill="#cc0000"/><circle cx="598.07" cy="284.82" r="3.2" fill="#cc0000"/><circle cx="692.9" cy="284.82" r="3.2" fill="#cc0000"/><circle cx="800.38" cy="284.82" r="3.2" fill="#cc0000"/><circle cx="503.24" cy="417.44" r="3.2" fill="#cc0000"/><circle cx="572.79" cy="417.44" r="3.2" fill="#cc0000"/><circle cx="642.33" cy="417.44" r="3.2" fill="#cc0000"/><circle cx="699.23" cy="417.44" r="3.2" fill="#cc0000"/><circle cx="768.77" cy="417.44" r="3.2" fill="#cc0000"/><circle cx="572.79" cy="531.11" r="3.2" fill="#cc0000"/><circle cx="591.75" cy="531.11" r="3.2" fill="#cc0000"/></svg>
<div class="a" style="left:168px;top:605px;width:727px;height:15px;background:#dcdcdc"></div>
<div class="a" style="left:168px;top:605px;width:49px;height:15px;background:#fff"></div>
<svg class="a" style="left:174px;top:608px" width="9" height="11" viewBox="0 0 9 11"><path d="M1 1 H5.5 L8 3.5 V9.6 H1 Z M5.5 1 V3.5 H8" fill="none" stroke="#4a9af5" stroke-width="1" stroke-linejoin="round"/></svg>
<div class="t" style="left:188.5px;top:608.30px;font-size:8px;color:#555;">模板页</div>
<div class="a" style="left:894.3px;top:40px;width:4.7px;height:582px;background:#e8e8e8"></div>
<div class="a" style="left:896.2px;top:40px;width:1px;height:582px;background-image:repeating-linear-gradient(180deg,#c9c9c9 0 1px,transparent 1px 5px)"></div>
<div class="a" style="left:895px;top:315.3px;width:3.8px;height:32.4px;background:#f4f4f4;border-left:1px solid #7a7a7a;border-top:1px solid #7a7a7a;border-bottom:1px solid #7a7a7a"></div>
<svg class="a" style="left:896px;top:329px" width="2" height="4" viewBox="0 0 2 4"><path d="M0 0 L2 2 L0 4 Z" fill="#555"/></svg>

<div class="a" style="left:642.6px;top:113.6px;width:130.6px;height:59px;background:#f8f8f8;border:1px solid #e2e2e2;box-shadow:0 1px 4px rgba(0,0,0,0.15)"></div>
<div class="a" style="left:642.6px;top:113.6px;width:130.6px;height:12.5px;background:#d9d9d9"></div>
<div class="t" style="left:648px;top:115.00px;font-size:8px;color:#666;">浮动工具</div>
<svg class="a" style="left:640px;top:110px" width="140" height="66" viewBox="640 110 140 66"><path d="M754.5 117.5 V116 H760.5 V122 H759 M753.5 118.5 H758.5 V123.5 H753.5 Z" fill="none" stroke="#2a2a2a" stroke-width="0.9"/><path d="M765.5 116.5 L771 122 M771 116.5 L765.5 122" stroke="#2a2a2a" stroke-width="1"/><text x="655" y="139.3" font-size="4" font-weight="bold" text-anchor="middle" fill="#2a2a2a" font-family="Liberation Sans" letter-spacing="0.2">VCC</text><path d="M650 140.5 H660 M655 140.5 V145.5" stroke="#2a2a2a" stroke-width="1"/><text x="672.8" y="139.3" font-size="4" font-weight="bold" text-anchor="middle" fill="#2a2a2a" font-family="Liberation Sans" letter-spacing="0.2">+5V</text><path d="M668 140.5 H678 M672.5 140.5 V145.5" stroke="#2a2a2a" stroke-width="1"/><path d="M690.5 135.5 V140.5 M686 140.5 H695 M688 142.5 H693 M690 144.5 H691" stroke="#2a2a2a" stroke-width="0.9"/><circle cx="708" cy="140.3" r="4.8" fill="none" stroke="#2a2a2a" stroke-width="0.9"/><path d="M708 135.5 V140.5 M704.8 140.5 H711.2 M706 142.3 H710 M707.2 144 H708.8" stroke="#2a2a2a" stroke-width="0.9"/><path d="M725.8 135.5 V140.5 M720.8 140.5 H730.8 L725.8 145.3 Z" fill="none" stroke="#2a2a2a" stroke-width="0.9" stroke-linejoin="round"/><path d="M738.5 138 H745 L748 140.5 L745 143 H738.5 Z M748 140.5 H750" fill="none" stroke="#2a2a2a" stroke-width="0.9"/><path d="M758 138 H764.5 L766.5 140.5 L764.5 143 H758 L756 140.5 Z M755 140.5 H756" fill="none" stroke="#2a2a2a" stroke-width="0.9"/><path d="M650 157.9 H652 M653.8 155.5 H658.8 L660.6 157.9 L658.8 160.4 H653.8 L652 157.9 Z" fill="none" stroke="#2a2a2a" stroke-width="0.9"/><path d="M668.5 153.5 H677.5 V160.5 H673.6 L673 162.2 L672.4 160.5 H668.5 Z" fill="none" stroke="#2a2a2a" stroke-width="0.9"/><text x="673" y="159.2" font-size="5.2" font-weight="bold" text-anchor="middle" fill="#2a2a2a" font-family="Liberation Sans">N</text><path d="M685 157.9 H695" stroke="#2a2a2a" stroke-width="0.9"/><path d="M690 156.2 L693 157.9 L690 159.6 L687 157.9 Z" fill="#2a2a2a"/><path d="M704 154 L712 162 M712 154 L704 162" stroke="#2a2a2a" stroke-width="0.9"/><circle cx="722.6" cy="161.3" r="1.1" fill="none" stroke="#2a2a2a" stroke-width="0.8"/><path d="M723.4 160.4 L728.5 154.6 C729.2 153.6 730.4 153.4 730.4 154.8 V158" fill="none" stroke="#2a2a2a" stroke-width="0.9"/><path d="M725.5 158.2 L728.2 155" stroke="#2a2a2a" stroke-width="1.8"/></svg>

<div class="a" style="left:899px;top:40px;width:163px;height:582px;background:#fff"></div>
<div class="a" style="left:1062px;top:40px;width:18px;height:582px;background:#efefef;border-left:1px solid #e3e3e3"></div>
<div class="a" style="left:899px;top:40px;width:181px;height:1px;background:#e8e8e8"></div>
<svg class="a" style="left:1068.5px;top:46.5px" width="6" height="8" viewBox="0 0 6 8"><path d="M1.6 0.6 H4.4 V3.6 L5.4 4.8 H0.6 L1.6 3.6 Z" fill="#222"/><path d="M3 4.8 V7.6" stroke="#222" stroke-width="0.9"/></svg>
<div class="a" style="left:1062px;top:61.5px;width:14.5px;height:46px;background:#fff;border:1px solid #e3e3e3;border-left:none"></div>
<div class="a" style="left:1062px;top:107.5px;width:14.5px;height:45px;background:#efefef;border:1px solid #e0e0e0;border-left:none;border-top:none"></div>
<div class="vt" style="left:1064.5px;width:10px;top:77.5px;line-height:7.4px;font-size:8.6px;color:#2a7ff2;-webkit-text-stroke-width:0.3px">属<br>性</div>
<div class="vt" style="left:1064.5px;width:10px;top:122px;line-height:7.4px;font-size:8.6px;color:#484848">过<br>滤</div>
<div class="t" style="left:904px;top:46.00px;font-size:8px;color:#444;">图页</div>
<div class="t" style="left:1010px;top:46.00px;font-size:8px;color:#444;">选中数量</div>
<div class="t" style="left:1046.5px;top:46.00px;font-size:7.8px;color:#444;">0</div>
<div class="a" style="left:899px;top:60.5px;width:163px;height:15px;background:#ebebeb"></div>
<svg class="a" style="left:900px;top:65.5px" width="6" height="5" viewBox="0 0 6 5"><path d="M0.5 0.5 H5.5 L3 4 Z" fill="#555"/></svg>
<div class="t" style="left:908px;top:63.00px;font-size:8px;color:#444;">基础属性</div>
<svg class="a" style="left:966px;top:75.5px" width="10" height="5" viewBox="0 0 10 5"><path d="M0 0 H10 L5 4.5 Z" fill="#e2e2e2"/></svg>
<div class="t" style="left:915px;top:83.00px;font-size:8px;color:#444;">名称</div>
<div class="inp g" style="left:978px;top:80.5px;width:79px;height:15px"></div>
<div class="t" style="left:983.5px;top:83.00px;font-size:7.8px;color:#bdbdbd;">P1</div>
<div class="a" style="left:899px;top:100.5px;width:163px;height:15px;background:#ebebeb"></div>
<svg class="a" style="left:900px;top:105.5px" width="6" height="5" viewBox="0 0 6 5"><path d="M0.5 0.5 H5.5 L3 4 Z" fill="#555"/></svg>
<div class="t" style="left:908px;top:103.00px;font-size:8px;color:#444;">图纸</div>
<div class="t" style="left:915px;top:123.50px;font-size:8px;color:#444;">图纸</div>
<div class="inp" style="left:978px;top:121px;width:48.5px;height:15px"></div>
<div class="t" style="left:983.5px;top:123.50px;font-size:7.6px;color:#444;">Sheet-S</div>
<div class="t" style="left:1015px;top:122.50px;font-size:8.5px;color:#444;">···</div>
<svg class="a" style="left:1031px;top:122px" width="12" height="13" viewBox="0 0 12 13"><path d="M1.5 11.5 L2.2 8.6 L8.6 2.2 C9.2 1.6 10 1.6 10.6 2.2 C11.2 2.8 11.2 3.6 10.6 4.2 L4.2 10.6 Z M7.8 3 L9.8 5" fill="none" stroke="#333" stroke-width="0.9" stroke-linejoin="round"/></svg>
<svg class="a" style="left:1046px;top:122px" width="12" height="13" viewBox="0 0 12 13"><path d="M9.8 4 C9 2.5 7.5 1.6 5.8 1.6 C3.2 1.6 1.3 3.6 1.3 6.2 C1.3 8.8 3.2 10.8 5.8 10.8 C8.3 10.8 10.2 8.9 10.3 6.5" fill="none" stroke="#333" stroke-width="1"/><path d="M10.4 1.3 V4.4 H7.3" fill="none" stroke="#333" stroke-width="1"/></svg>
<div class="t" style="left:915px;top:144.00px;font-size:8px;color:#444;">图纸尺寸</div>
<div class="inp" style="left:978px;top:141.5px;width:79px;height:15px"></div>
<div class="t" style="left:981.5px;top:144.00px;font-size:7.8px;color:#444;">A4</div>
<svg class="a" style="left:1047.5px;top:147.5px" width="6" height="4" viewBox="0 0 6 4"><path d="M0.8 0.8 L3 3 L5.2 0.8" fill="none" stroke="#555" stroke-width="0.8"/></svg>
<div class="t" style="left:915px;top:164.00px;font-size:8px;color:#444;">图纸宽度</div>
<div class="inp" style="left:978px;top:161.5px;width:48.5px;height:15px"></div>
<div class="t" style="left:984.5px;top:164.00px;font-size:7.9px;color:#444;">11.7inch</div>
<div class="t" style="left:915px;top:184.00px;font-size:8px;color:#444;">图纸高度</div>
<div class="inp" style="left:978px;top:181.5px;width:48.5px;height:15px"></div>
<div class="t" style="left:983.5px;top:184.00px;font-size:7.9px;color:#444;">8.25inch</div>
<svg class="a" style="left:1030px;top:173px" width="13" height="13" viewBox="0 0 13 13"><path d="M4.5 1.5 H8.5 V3.5 H10.5 V4.5 C11.5 4.5 12 5.2 12 6 C12 6.8 11.5 7.5 10.5 7.5 V9.5 H8.5 V11.5 H4.5 V9.5 H2.5 V7.5 C1.5 7.5 1 6.8 1 6 C1 5.2 1.5 4.5 2.5 4.5 V3.5 H4.5 Z" fill="none" stroke="#333" stroke-width="0.9" stroke-linejoin="round"/></svg>
<svg class="a" style="left:1046px;top:173px" width="11" height="13" viewBox="0 0 11 13"><path d="M3.2 11.5 V1.5 L1 3.8 M7.8 1.5 V11.5 L10 9.2" fill="none" stroke="#333" stroke-width="1"/></svg>
<div class="a" style="left:899px;top:202px;width:163px;height:15px;background:#ebebeb"></div>
<svg class="a" style="left:900px;top:207px" width="6" height="5" viewBox="0 0 6 5"><path d="M0.5 0.5 H5.5 L3 4 Z" fill="#555"/></svg>
<div class="t" style="left:908px;top:204.50px;font-size:8px;color:#444;">图纸属性</div>
<div class="cb" style="left:903.5px;top:225.40px"></div>
<div class="t" style="left:915px;top:224.90px;font-size:8px;color:#444;">@创建日期</div>
<div class="cbk" style="left:967px;top:225.60px"></div>
<svg class="a" style="left:967px;top:225.6px" width="9" height="9" viewBox="0 0 9 9"><path d="M2 4.8 L3.8 6.8 L7.2 2.2" fill="none" stroke="#fff" stroke-width="1.2"/></svg>
<div class="inp g" style="left:978px;top:222.60px;width:79px;height:15px"></div>
<div class="t" style="left:983.5px;top:224.90px;font-size:7.8px;color:#bdbdbd;">2024-04-19</div>
<div class="cb" style="left:903.5px;top:245.62px"></div>
<div class="t" style="left:915px;top:245.12px;font-size:8px;color:#444;">@图页总数</div>
<div class="cbk" style="left:967px;top:245.82px"></div>
<svg class="a" style="left:967px;top:245.82px" width="9" height="9" viewBox="0 0 9 9"><path d="M2 4.8 L3.8 6.8 L7.2 2.2" fill="none" stroke="#fff" stroke-width="1.2"/></svg>
<div class="inp g" style="left:978px;top:242.82px;width:79px;height:15px"></div>
<div class="t" style="left:983.5px;top:245.12px;font-size:7.8px;color:#bdbdbd;">1</div>
<div class="cb" style="left:903.5px;top:265.84px"></div>
<div class="t" style="left:915px;top:265.34px;font-size:8px;color:#444;">@图页名称</div>
<div class="cbk" style="left:967px;top:266.04px"></div>
<svg class="a" style="left:967px;top:266.04px" width="9" height="9" viewBox="0 0 9 9"><path d="M2 4.8 L3.8 6.8 L7.2 2.2" fill="none" stroke="#fff" stroke-width="1.2"/></svg>
<div class="inp g" style="left:978px;top:263.04px;width:79px;height:15px"></div>
<div class="t" style="left:983.5px;top:265.34px;font-size:7.8px;color:#bdbdbd;">P1</div>
<div class="cb" style="left:903.5px;top:286.06px"></div>
<div class="t" style="left:915px;top:285.56px;font-size:8px;color:#444;">@图页编号</div>
<div class="cbk" style="left:967px;top:286.26px"></div>
<svg class="a" style="left:967px;top:286.26px" width="9" height="9" viewBox="0 0 9 9"><path d="M2 4.8 L3.8 6.8 L7.2 2.2" fill="none" stroke="#fff" stroke-width="1.2"/></svg>
<div class="inp g" style="left:978px;top:283.26px;width:79px;height:15px"></div>
<div class="t" style="left:983.5px;top:285.56px;font-size:7.8px;color:#bdbdbd;">1</div>
<div class="cb" style="left:903.5px;top:306.28px"></div>
<div class="t" style="left:915px;top:305.78px;font-size:8px;color:#444;">@工程名称</div>
<div class="cbk" style="left:967px;top:306.48px"></div>
<svg class="a" style="left:967px;top:306.47999999999996px" width="9" height="9" viewBox="0 0 9 9"><path d="M2 4.8 L3.8 6.8 L7.2 2.2" fill="none" stroke="#fff" stroke-width="1.2"/></svg>
<div class="inp g" style="left:978px;top:303.48px;width:79px;height:15px"></div>
<div class="t" style="left:983.5px;top:305.78px;font-size:7.8px;color:#bdbdbd;">测试</div>
<div class="cb" style="left:903.5px;top:326.50px"></div>
<div class="t" style="left:915px;top:326.00px;font-size:8px;color:#444;">@原理图名称</div>
<div class="cbk" style="left:967px;top:326.70px"></div>
<svg class="a" style="left:967px;top:326.7px" width="9" height="9" viewBox="0 0 9 9"><path d="M2 4.8 L3.8 6.8 L7.2 2.2" fill="none" stroke="#fff" stroke-width="1.2"/></svg>
<div class="inp g" style="left:978px;top:323.70px;width:79px;height:15px"></div>
<div class="t" style="left:983.5px;top:326.00px;font-size:7.8px;color:#bdbdbd;">Schematic1</div>
<div class="cb" style="left:903.5px;top:346.72px"></div>
<div class="t" style="left:915px;top:346.22px;font-size:8px;color:#444;">@更新日期</div>
<div class="cbk" style="left:967px;top:346.92px"></div>
<svg class="a" style="left:967px;top:346.92px" width="9" height="9" viewBox="0 0 9 9"><path d="M2 4.8 L3.8 6.8 L7.2 2.2" fill="none" stroke="#fff" stroke-width="1.2"/></svg>
<div class="inp g" style="left:978px;top:343.92px;width:79px;height:15px"></div>
<div class="t" style="left:983.5px;top:346.22px;font-size:7.8px;color:#bdbdbd;">2024-04-19</div>
<div class="cb" style="left:903.5px;top:366.94px"></div>
<div class="t" style="left:915px;top:366.44px;font-size:8px;color:#444;">公司</div>
<div class="cbk" style="left:967px;top:367.14px"></div>
<svg class="a" style="left:967px;top:367.14px" width="9" height="9" viewBox="0 0 9 9"><path d="M2 4.8 L3.8 6.8 L7.2 2.2" fill="none" stroke="#fff" stroke-width="1.2"/></svg>
<div class="inp" style="left:978px;top:364.14px;width:79px;height:15px"></div>
<div class="t" style="left:983.5px;top:366.44px;font-size:7.8px;color:#3c86f2;">嘉立创EDA</div>
<div class="cb" style="left:903.5px;top:387.16px"></div>
<div class="t" style="left:915px;top:386.66px;font-size:8px;color:#444;">绘制</div>
<div class="cbk" style="left:967px;top:387.36px"></div>
<svg class="a" style="left:967px;top:387.35999999999996px" width="9" height="9" viewBox="0 0 9 9"><path d="M2 4.8 L3.8 6.8 L7.2 2.2" fill="none" stroke="#fff" stroke-width="1.2"/></svg>
<div class="inp" style="left:978px;top:384.36px;width:79px;height:15px"></div>
<div class="cb" style="left:903.5px;top:407.38px"></div>
<div class="t" style="left:915px;top:406.88px;font-size:8px;color:#444;">图页尺寸</div>
<div class="cbk" style="left:967px;top:407.58px"></div>
<svg class="a" style="left:967px;top:407.58px" width="9" height="9" viewBox="0 0 9 9"><path d="M2 4.8 L3.8 6.8 L7.2 2.2" fill="none" stroke="#fff" stroke-width="1.2"/></svg>
<div class="inp" style="left:978px;top:404.58px;width:79px;height:15px"></div>
<div class="t" style="left:983.5px;top:406.88px;font-size:7.8px;color:#3c86f2;">A4</div>
<div class="cb" style="left:903.5px;top:427.60px"></div>
<div class="t" style="left:915px;top:427.10px;font-size:8px;color:#444;">料号</div>
<div class="cbk" style="left:967px;top:427.80px"></div>
<svg class="a" style="left:967px;top:427.8px" width="9" height="9" viewBox="0 0 9 9"><path d="M2 4.8 L3.8 6.8 L7.2 2.2" fill="none" stroke="#fff" stroke-width="1.2"/></svg>
<div class="inp" style="left:978px;top:424.80px;width:79px;height:15px"></div>
<div class="cb" style="left:903.5px;top:447.82px"></div>
<div class="t" style="left:915px;top:447.32px;font-size:8px;color:#444;">审阅</div>
<div class="cbk" style="left:967px;top:448.02px"></div>
<svg class="a" style="left:967px;top:448.02px" width="9" height="9" viewBox="0 0 9 9"><path d="M2 4.8 L3.8 6.8 L7.2 2.2" fill="none" stroke="#fff" stroke-width="1.2"/></svg>
<div class="inp" style="left:978px;top:445.02px;width:79px;height:15px"></div>
<div class="cb" style="left:903.5px;top:468.04px"></div>
<div class="t" style="left:915px;top:467.54px;font-size:8px;color:#444;">版本</div>
<div class="cbk" style="left:967px;top:468.24px"></div>
<svg class="a" style="left:967px;top:468.23999999999995px" width="9" height="9" viewBox="0 0 9 9"><path d="M2 4.8 L3.8 6.8 L7.2 2.2" fill="none" stroke="#fff" stroke-width="1.2"/></svg>
<div class="inp" style="left:978px;top:465.24px;width:79px;height:15px"></div>
<div class="t" style="left:983.5px;top:467.54px;font-size:7.8px;color:#3c86f2;">V1.0</div>
<div class="a" style="left:899px;top:570px;width:181px;height:50px;background:#eeeeee"></div>
<div class="a" style="left:899px;top:587px;width:181px;height:1px;background:#e2e2e2"></div>
<div class="a" style="left:899px;top:604px;width:181px;height:1px;background:#e2e2e2"></div>
<div class="a" style="left:899px;top:570px;width:181px;height:1px;background:#e4e4e4"></div>
<div class="a" style="left:921px;top:570px;width:1px;height:50px;background:#e6e6e6"></div>
<div class="a" style="left:990px;top:570px;width:1px;height:50px;background:#e6e6e6"></div>
<div class="a" style="left:1011px;top:570px;width:1px;height:50px;background:#e6e6e6"></div>
<div class="t" style="left:912.5px;top:574.20px;font-size:7.8px;color:#555;">S</div>
<div class="t" style="left:926.5px;top:574.20px;font-size:7.8px;color:#444;">200%</div>
<div class="t" style="left:990px;width:18.5px;text-align:right;top:574.2px;font-size:7.8px;color:#555">G</div>
<div class="t" style="left:1016.5px;top:574.20px;font-size:7.8px;color:#444;">0.05inch</div>
<div class="t" style="left:912.5px;top:590.50px;font-size:7.8px;color:#555;">X</div>
<div class="t" style="left:926.5px;top:590.50px;font-size:7.8px;color:#444;">2.65inch</div>
<div class="t" style="left:990px;width:18.5px;text-align:right;top:590.5px;font-size:7.8px;color:#555">dX</div>
<div class="t" style="left:1016.5px;top:590.50px;font-size:7.8px;color:#444;">-1.365inch</div>
<div class="t" style="left:912.5px;top:606.70px;font-size:7.8px;color:#555;">Y</div>
<div class="t" style="left:926.5px;top:606.70px;font-size:7.8px;color:#444;">6.65inch</div>
<div class="t" style="left:990px;width:18.5px;text-align:right;top:606.7px;font-size:7.8px;color:#555">dY</div>
<div class="t" style="left:1016.5px;top:606.70px;font-size:7.8px;color:#444;">1.555inch</div>

<div class="a" style="left:0;top:620px;width:1080px;height:4px;background:#e6e6e6"></div>
<div class="a" style="left:0;top:621.5px;width:1080px;height:1px;background-image:repeating-linear-gradient(90deg,#c9c9c9 0 1px,transparent 1px 5px)"></div>
<div class="a" style="left:0;top:624px;width:1080px;height:20px;background:#efefef"></div>
<svg class="a" style="left:8px;top:628px" width="8" height="8" viewBox="0 0 8 8"><path d="M0.8 4 H5.5 M4.5 1.8 V6.2 M5.5 2.5 H7 V5.5 H5.5" fill="#222" stroke="#222" stroke-width="1"/></svg>
<div class="a" style="left:22px;top:624px;width:44px;height:19px;background:#fff"></div>
<div class="a" style="left:66px;top:624px;width:1px;height:19px;background:#e2e2e2"></div>
<div class="a" style="left:111px;top:624px;width:1px;height:19px;background:#e2e2e2"></div>
<div class="a" style="left:156px;top:624px;width:1px;height:19px;background:#e2e2e2"></div>
<div class="a" style="left:209px;top:624px;width:1px;height:19px;background:#e2e2e2"></div>
<div class="t" style="left:39.5px;top:627.80px;font-size:8px;color:#2a7ff2;">库</div>
<div class="a" style="left:73px;top:629px;width:8px;height:8px;border-radius:4px;background:#f00"></div>
<div class="t" style="left:81px;top:627.80px;font-size:8px;color:#444;">日志</div>
<div class="t" style="left:125px;top:627.80px;font-size:8.5px;color:#555;">DRC</div>
<div class="t" style="left:168px;top:627.80px;font-size:8px;color:#444;">查找结果</div>
<div class="t" style="left:1038px;top:635.50px;font-size:5.2px;color:#8a8a8a;-webkit-text-stroke-width:0">CSDN @aiço_jj</div>
<div class="a" style="left:0;top:644px;width:1080px;height:5px;background:#141417"></div>

</body></html>
